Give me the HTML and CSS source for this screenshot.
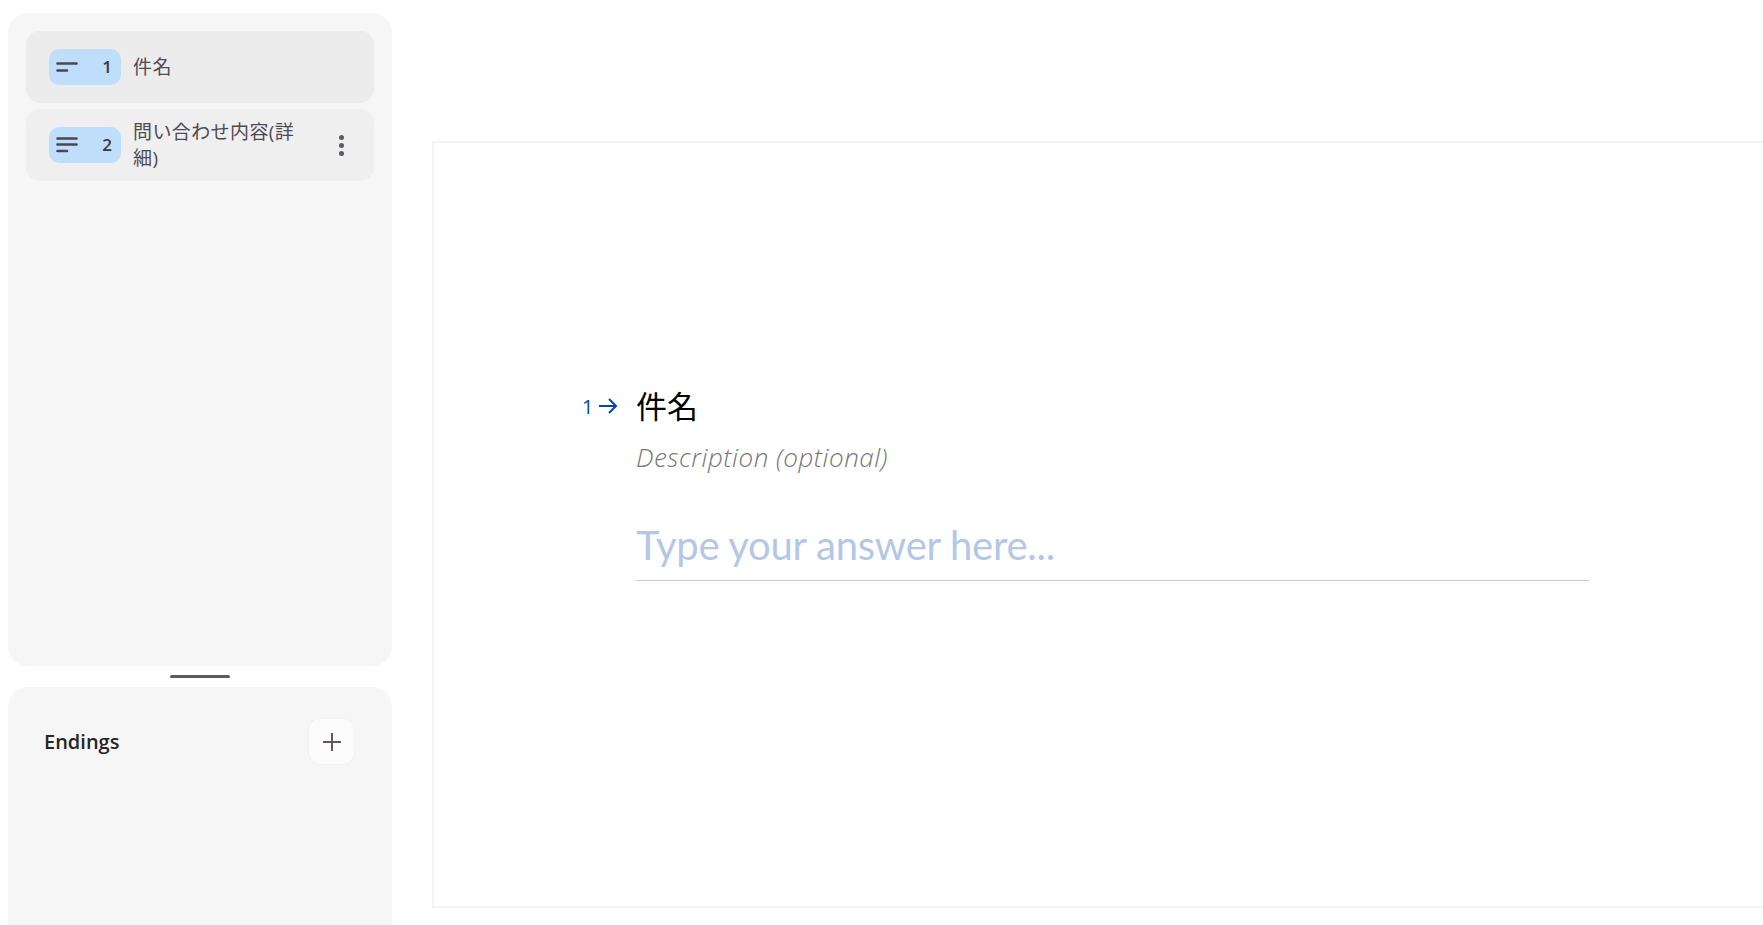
FILE: index.html
```html
<!DOCTYPE html>
<html lang="ja">
<head>
    <meta charset="UTF-8">
    <title>件名</title>
    <link rel="stylesheet" href="styles.css">
</head>
<body>
    <aside class="sidebar">
        <div class="panel question-panel">
            <div class="question-item active">
                <div class="badge">
                    <svg class="badge-icon" viewBox="0 0 22 14" width="22" height="14">
                        <path d="M1.5 3.5H20.5M1.5 10.5H11"/>
                    </svg>
                    <span>1</span>
                </div>
                <div class="question-title">件名</div>
            </div>
            <div class="question-item">
                <div class="badge">
                    <svg class="badge-icon" viewBox="0 0 22 14" width="22" height="14">
                        <path d="M1.5 0.5H20.5M1.5 6.5H20.5M1.5 13H11"/>
                    </svg>
                    <span>2</span>
                </div>
                <div class="question-title">問い合わせ内容(詳細)</div>
                <div class="more-btn"><span></span><span></span><span></span></div>
            </div>
        </div>
        <div class="resize-handle"></div>
        <div class="panel endings-panel">
            <div class="endings-title">Endings</div>
            <button class="add-btn" type="button">
                <svg viewBox="0 0 18 18" width="18" height="18">
                    <path d="M9 0V18M0 9H18"/>
                </svg>
            </button>
        </div>
    </aside>

    <main class="stage">
        <div class="canvas">
            <div class="question">
                <div class="question-num">
                    <span>1</span>
                    <svg viewBox="0 0 20 18" width="20" height="18">
                        <path d="M1 9H18M11 2L18 9L11 16"/>
                    </svg>
                </div>
                <div class="question-body">
                    <h1>件名</h1>
                    <p class="description">Description (optional)</p>
                    <div class="answer">Type your answer here...</div>
                </div>
            </div>
        </div>
    </main>
</body>
</html>
```

FILE: styles.css
```css
* {
    margin: 0;
    padding: 0;
    box-sizing: border-box;
}

html, body {
    height: 100%;
    overflow: hidden;
}

body {
    font-family: "Open Sans", "Noto Sans CJK JP", sans-serif;
    background: white;
    display: flex;
}

.sidebar {
    width: 384px;
    flex: none;
    margin-left: 8px;
    padding-top: 13px;
    display: flex;
    flex-direction: column;
}

.panel {
    background: #f6f6f6;
    border-radius: 20px;
    flex: none;
}

.question-panel {
    height: 653px;
    padding: 18px;
    display: flex;
    flex-direction: column;
    gap: 6px;
}

.question-item {
    height: 72px;
    background: #efefef;
    border-radius: 14px;
    padding: 0 30px 0 23px;
    display: flex;
    align-items: center;
    gap: 12px;
}

.question-item.active {
    background: #ececec;
}

.badge {
    width: 72px;
    height: 36px;
    flex: none;
    background: #bfdefb;
    border-radius: 10px;
    padding: 0 9px 2px 7px;
    display: flex;
    align-items: center;
    justify-content: space-between;
    font-size: 17px;
    font-weight: 600;
    color: #3c3640;
}

.badge-icon {
    overflow: visible;
    margin-top: 2px;
}

.badge-icon path {
    fill: none;
    stroke: #4b4650;
    stroke-width: 2.6;
    stroke-linecap: round;
}

.question-title {
    flex: 1;
    font-size: 19px;
    letter-spacing: 0.4px;
    line-height: 26px;
    color: #4f4a52;
}

.more-btn {
    width: 5px;
    flex: none;
    margin-left: 23px;
    display: flex;
    flex-direction: column;
    gap: 3px;
}

.more-btn span {
    width: 5px;
    height: 5px;
    background: #5e5964;
    border-radius: 50%;
}

.resize-handle {
    width: 60px;
    height: 3px;
    flex: none;
    background: #5e5964;
    border-radius: 2px;
    margin: 9px auto;
}

.endings-panel {
    height: 300px;
    padding: 31px 37px 0 36px;
    display: flex;
    align-items: flex-start;
    justify-content: space-between;
}

.endings-title {
    font-size: 20px;
    font-weight: 600;
    line-height: 48px;
    color: #262627;
}

.add-btn {
    width: 47px;
    height: 47px;
    background: #fbfbfb;
    border: 1px solid #f1f1f1;
    border-radius: 12px;
    display: flex;
    align-items: center;
    justify-content: center;
}

.add-btn path {
    fill: none;
    stroke: #5e5964;
    stroke-width: 2;
}

.stage {
    flex: none;
    padding: 141px 0 0 40px;
}

.canvas {
    width: 1500px;
    height: 767px;
    border: 2px solid #f3f3f3;
    padding: 242px 0 0 148px;
}

.question {
    display: flex;
}

.question-num {
    width: 54px;
    height: 42px;
    flex: none;
    display: flex;
    align-items: center;
    gap: 5px;
    font-size: 20px;
    color: #0445af;
}

.question-num path {
    fill: none;
    stroke: #0445af;
    stroke-width: 2;
}

.question-body {
    width: 953px;
}

h1 {
    font-size: 31px;
    font-weight: 400;
    line-height: 42px;
    color: black;
}

.description {
    margin-top: 14px;
    font-size: 26px;
    font-style: italic;
    font-weight: 300;
    letter-spacing: 0.5px;
    line-height: 32px;
    color: #767676;
}

.answer {
    margin-top: 44px;
    height: 64px;
    border-bottom: 1px solid #b2cdf0;
    font-family: Lato, "Open Sans", sans-serif;
    font-size: 40px;
    letter-spacing: -0.25px;
    line-height: 56px;
    color: #b4c7e7;
}
```
